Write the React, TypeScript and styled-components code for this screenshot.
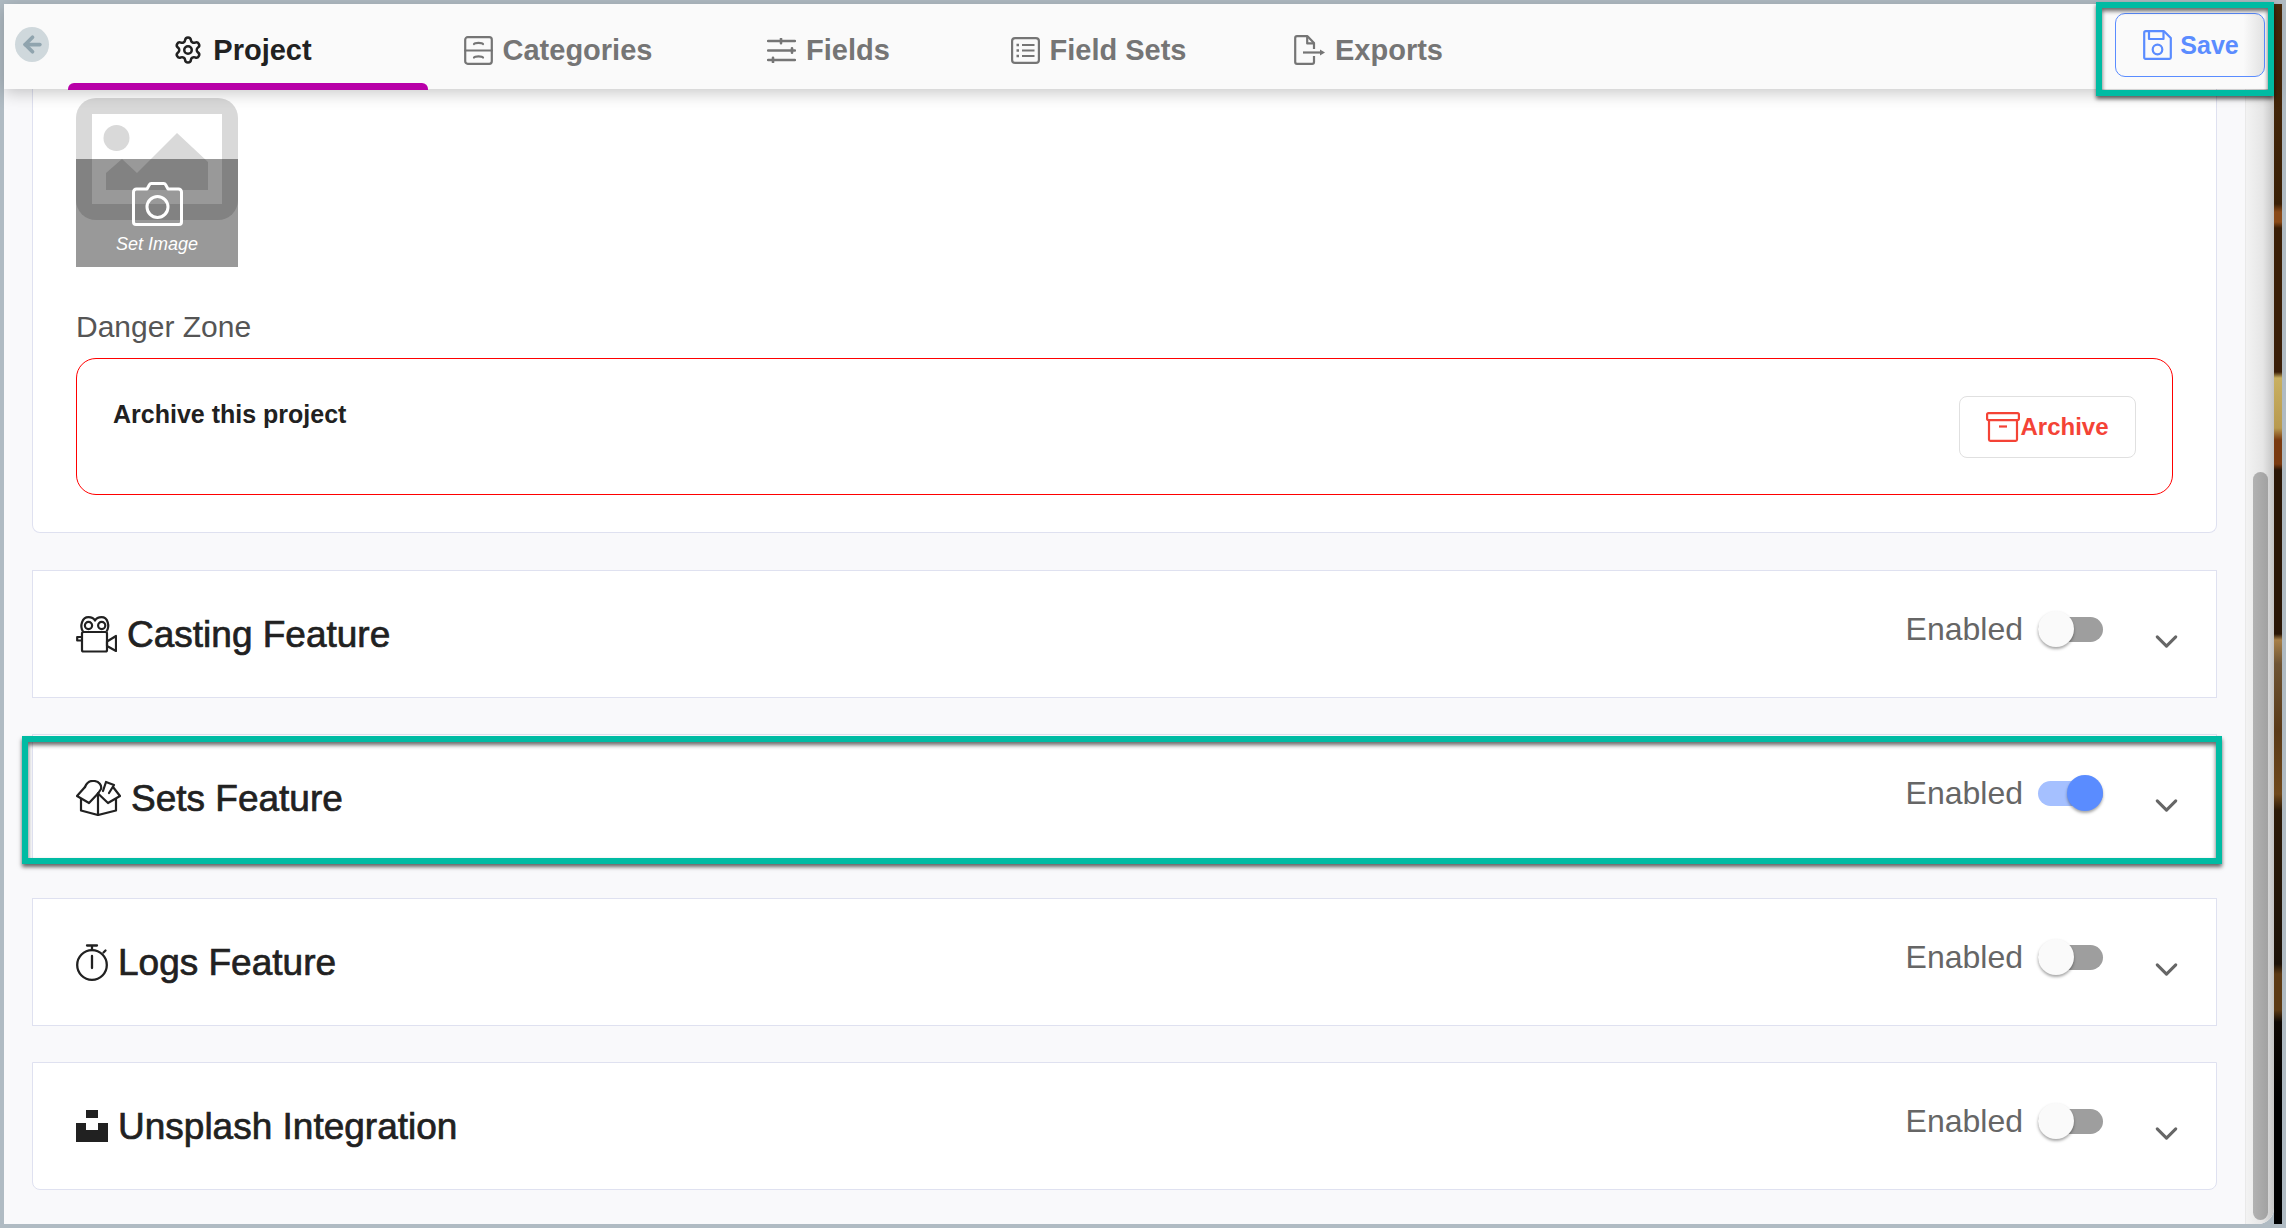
import styled, { createGlobalStyle } from "styled-components";
import { ArrowLeft, ChevronDown, Settings } from "lucide-react";

const TEAL = "#00bba3";
const BLUE = "#5a8cff";
const CARD_LINE = "#dfe1f0";

const GlobalStyle = createGlobalStyle`
  html, body {
    margin: 0;
    padding: 0;
    background: #b0bbc3;
  }

  * {
    box-sizing: border-box;
  }
`;

const Frame = styled.div`
  display: flex;
  width: 2286px;
  height: 1228px;
  padding: 4px;
  overflow: hidden;
  background: #b0bbc3;
  font-family: "Liberation Sans", Arial, sans-serif;
`;

const Window = styled.div`
  display: flex;
  flex-direction: column;
  flex: 1;
  min-width: 0;
  background: #f9f9fb;
  border-bottom-right-radius: 16px;
`;

const Photo = styled.div`
  flex: 0 0 8px;
  background: linear-gradient(
    to bottom,
    #4a2a0c 0,
    #3a2006 200px,
    #8a4a18 208px,
    #8a4a18 218px,
    #3a1e06 224px,
    #3a1e08 368px,
    #c9b060 374px,
    #b89a50 424px,
    #7a3a10 436px,
    #7a3a10 460px,
    #2a1606 466px,
    #2a1606 630px,
    #a88048 636px,
    #6e5434 660px,
    #5a3a18 726px,
    #70491c 790px,
    #2c1a08 806px,
    #1c1208 960px,
    #5c3a14 970px,
    #5c3a14 1006px,
    #0e0804 1018px,
    #000 1100px,
    #000 100%
  );
`;

const Header = styled.header`
  position: relative;
  z-index: 2;
  display: flex;
  flex: 0 0 85px;
  background: #fafafa;
  box-shadow: 0 4px 16px rgba(0, 0, 0, 0.22);
`;

const BackButton = styled.div`
  display: flex;
  justify-content: center;
  align-items: center;
  align-self: center;
  width: 34px;
  height: 35px;
  margin: 0 19px 4px 11px;
  border-radius: 50%;
  background: #cfd8dc;
  color: #90a4ae;
`;

const Tab = styled.div<{ $width: number; $active?: boolean; $shift?: number }>`
  position: relative;
  display: flex;
  justify-content: center;
  align-items: center;
  gap: 10px;
  width: ${(p) => p.$width}px;
  padding: 7px ${(p) => p.$shift ?? 0}px 0 0;
  color: ${(p) => (p.$active ? "#212121" : "#757575")};
  font-weight: 700;
  font-size: 29px;

  ${(p) =>
    p.$active &&
    `
    &::after {
      content: "";
      position: absolute;
      left: 0;
      right: 0;
      bottom: -1px;
      height: 7px;
      border-radius: 6px 6px 0 0;
      background: #b800a8;
    }
  `}
`;

const SaveButton = styled.div`
  position: relative;
  display: flex;
  justify-content: center;
  align-items: center;
  gap: 8px;
  width: 150px;
  height: 64px;
  margin: 9px 9px 0 auto;
  padding-left: 2px;
  border: 1.5px solid ${BLUE};
  border-radius: 10px;
  background: linear-gradient(to right, #fafafa 86%, #e2e2e2);
  color: ${BLUE};
  font-weight: 700;
  font-size: 25px;
`;

const Highlight = styled.div<{ $box: string }>`
  position: absolute;
  inset: ${(p) => p.$box};
  z-index: 3;
  border: 6px solid ${TEAL};
  box-shadow: 0 3px 4px rgba(0, 0, 0, 0.6), inset 0 3px 4px rgba(0, 0, 0, 0.6);
  pointer-events: none;
`;

const Body = styled.div`
  display: flex;
  flex: 1;
  min-height: 0;
`;

const Main = styled.main`
  display: flex;
  flex-direction: column;
  flex: 1;
  min-width: 0;
  padding: 0 28px;
`;

const Gutter = styled.div`
  display: flex;
  flex-direction: column;
  justify-content: flex-end;
  flex: 0 0 29px;
  padding: 0 6px 4px 7px;
  border-left: 1px solid #e9e9e9;
  border-bottom-right-radius: 16px;
  background: linear-gradient(to right, #f3f3f3, #e6e6e6 60%, #c4c4c4);
`;

const Thumb = styled.div`
  height: 748px;
  border-radius: 8px;
  background: linear-gradient(to right, #b2b2b2, #a2a2a2);
`;

const ProjectCard = styled.section`
  height: 444px;
  padding: 9px 43px 0 43px;
  border: 1px solid ${CARD_LINE};
  border-top: none;
  border-radius: 0 0 8px 8px;
  background: #fff;
`;

const ImageTile = styled.div`
  position: relative;
  width: 162px;
  height: 169px;
`;

const TileOverlay = styled.div`
  position: absolute;
  left: 0;
  right: 0;
  bottom: 0;
  display: flex;
  flex-direction: column;
  align-items: center;
  gap: 7px;
  height: 108px;
  padding-top: 23px;
  background: rgba(0, 0, 0, 0.4);
  color: #fff;
  font-style: italic;
  font-size: 18px;
  line-height: 22px;
`;

const SectionLabel = styled.div`
  margin: 43px 0 14px;
  color: #555;
  font-size: 30px;
  line-height: 34px;
`;

const DangerBox = styled.div`
  display: flex;
  justify-content: space-between;
  align-items: center;
  height: 137px;
  padding: 0 36px;
  border: 1.5px solid #f00;
  border-radius: 20px;
`;

const DangerTitle = styled.div`
  align-self: flex-start;
  margin-top: 41px;
  color: #212121;
  font-weight: 700;
  font-size: 25px;
  line-height: 28px;
`;

const ArchiveButton = styled.div`
  display: flex;
  justify-content: center;
  align-items: center;
  width: 177px;
  height: 62px;
  border: 1.5px solid #e0e0e0;
  border-radius: 8px;
  color: #f44336;
  font-weight: 700;
  font-size: 24px;
`;

const FeatureList = styled.div`
  display: flex;
  flex-direction: column;
  gap: 36px;
  margin-top: 37px;
`;

const FeatureCard = styled.section`
  position: relative;
  display: flex;
  justify-content: space-between;
  align-items: center;
  height: 128px;
  padding: 0 40px 0 43px;
  border: 1px solid ${CARD_LINE};
  background: #fff;

  &:last-child {
    border-radius: 0 0 8px 8px;
  }
`;

const FeatureTitle = styled.h2`
  display: flex;
  align-items: center;
  gap: 10px;
  margin: 0;
  color: #212121;
  font-weight: 400;
  font-size: 37px;
`;

const FeatureName = styled.span`
  padding-top: 2px;
  -webkit-text-stroke: 0.7px #212121;
`;

const FeatureControls = styled.div`
  display: flex;
  align-items: center;
`;

const EnabledLabel = styled.div`
  display: flex;
  align-items: center;
  gap: 15px;
  margin-bottom: 10px;
  color: #666;
  font-size: 32px;
`;

const SwitchTrack = styled.div<{ $on?: boolean }>`
  position: relative;
  width: 65px;
  height: 25px;
  border-radius: 13px;
  background: ${(p) => (p.$on ? "#a5c0ff" : "#9e9e9e")};
`;

const SwitchThumb = styled.div<{ $on?: boolean }>`
  position: absolute;
  top: -6px;
  left: ${(p) => (p.$on ? 29 : 0)}px;
  width: 36px;
  height: 36px;
  border-radius: 50%;
  background: ${(p) => (p.$on ? BLUE : "#fafafa")};
  box-shadow: 0 2px 3px rgba(0, 0, 0, 0.35);
`;

const Chevron = styled.div`
  display: flex;
  justify-content: center;
  width: 20px;
  margin: 14px 0 0 53px;
  color: #666;

  svg {
    flex: none;
  }
`;

const CategoriesIcon = () => (
  <svg width="29" height="29" viewBox="0 0 29 29" fill="none" stroke="currentColor" strokeWidth="2.2" strokeLinecap="round">
    <rect x="1.2" y="1.2" width="26.6" height="26.6" rx="2.5" />
    <path d="M1.2 14.5h26.6M10 8c1-1.6 8-1.6 9 0M10 21.5c1-1.6 8-1.6 9 0" />
  </svg>
);

const FieldsIcon = () => (
  <svg width="29" height="25" viewBox="0 0 29 25" fill="none" stroke="currentColor" strokeWidth="2.4" strokeLinecap="round">
    <path d="M1 3h27M1 12.5h27M1 22h27" />
    <path d="M14 .8v4.400M25 10.300v4.400M6 19.800v4.400" strokeWidth="2.6" />
  </svg>
);

const FieldSetsIcon = () => (
  <svg width="29" height="27" viewBox="0 0 29 27" fill="none" stroke="currentColor" strokeWidth="2.2">
    <rect x="1.1" y="1.1" width="26.8" height="24.8" rx="3" />
    <path d="M11 8h12.500M11 13.500h12.500M11 19h12.500" />
    <path d="M5.500 8h2.500M5.500 13.500h2.500M5.500 19h2.500" strokeWidth="2.6" />
  </svg>
);

const ExportsIcon = () => (
  <svg width="31" height="30" viewBox="0 0 31 30" fill="none" stroke="currentColor" strokeWidth="2.2" strokeLinejoin="round">
    <path d="M20 21v6c0 1-.8 1.800-1.800 1.800H3c-1 0-1.800-.8-1.800-1.800V3c0-1 .8-1.800 1.800-1.800h10.500L20 8v6" />
    <path d="M13.200 1.500V8.400H20" />
    <path d="M9 17.500h18" />
    <path d="M26 14.500l5 3-5 3z" fill="currentColor" stroke="none" />
  </svg>
);

const SaveIcon = () => (
  <svg width="29" height="30" viewBox="0 0 29 30" fill="none" stroke="currentColor" strokeWidth="2.2" strokeLinejoin="round">
    <path d="M2.800 1.200H21L27.800 8v19.500c0 .7-.6 1.300-1.300 1.300H2.500c-.7 0-1.300-.6-1.300-1.300V2.800c0-.9.7-1.600 1.600-1.600z" />
    <path d="M6 1.500V9h14.500V1.500" />
    <circle cx="14.500" cy="19.500" r="4.800" />
  </svg>
);

const ArchiveIcon = () => (
  <svg width="34" height="30" viewBox="0 0 34 30" fill="none" stroke="currentColor" strokeWidth="2.2" strokeLinejoin="round">
    <rect x="1.100" y="1.100" width="31.800" height="7" rx="1.500" />
    <path d="M3 8.100v19.500c0 .7.600 1.300 1.300 1.300h25.400c.7 0 1.300-.6 1.300-1.300V8.100" />
    <path d="M13 14.500h8" />
  </svg>
);

const CastingIcon = () => (
  <svg width="41" height="37" viewBox="0 0 41 37" fill="none" stroke="#212121" strokeWidth="2.200" strokeLinejoin="round">
    <path d="M7 15.500C3.500 10 6 1.200 12.500 1.200c3.500 0 5.500 1.500 6.500 3.300 1-1.800 3-3.300 6.500-3.300 6.500 0 8.500 9 5 14.300" />
    <circle cx="12.500" cy="9.500" r="3.600" />
    <circle cx="25.700" cy="9.500" r="3.600" />
    <rect x="6" y="16" width="25" height="19.500" rx="1.500" />
    <path d="M6 21H1.200v3.500H6" />
    <path d="M31 25.500l9-5.500v15l-9-5z" />
  </svg>
);

const SetsIcon = () => (
  <svg width="45" height="36" viewBox="0 0 45 36" fill="none" stroke="#212121" strokeWidth="2.200" strokeLinejoin="round" strokeLinecap="round">
    <path d="M5 19v11.500l17 4.500 18-4.500V19" />
    <path d="M22 13.500V35" />
    <path d="M22 13.500L13 23 1 16l8-9" />
    <path d="M22 13.500L32 23l12-7-7-9" />
    <path d="M9 7c2-5 6-6.500 9.500-6 4.500.7 7.500 4 6.500 8l-3 4.500" />
    <path d="M27 11l3-9 8 3-5 8" />
  </svg>
);

const LogsIcon = () => (
  <svg width="32" height="37" viewBox="0 0 32 37" fill="none" stroke="#212121" strokeWidth="2.300" strokeLinecap="round">
    <circle cx="16" cy="21" r="14.800" />
    <path d="M11 1.500h10M16 1.500v4.500M16 12v12M27.500 8.500l2-2" />
  </svg>
);

const UnsplashIcon = () => (
  <svg width="32" height="32" viewBox="0 0 32 32" fill="#212121">
    <path d="M10 0h12v8H10z" />
    <path d="M0 13h10v7h12v-7h10v19H0z" />
  </svg>
);

const PlaceholderArt = () => (
  <svg width="162" height="122" viewBox="0 0 162 122">
    <rect width="162" height="122" rx="20" fill="#d9d9d9" />
    <rect x="16" y="16" width="130" height="90" fill="#fff" />
    <circle cx="40.500" cy="40" r="13" fill="#d9d9d9" />
    <path d="M30 92V75l16-14 15 14 40-40 31 29v28z" fill="#d9d9d9" />
  </svg>
);

const CameraIcon = () => (
  <svg width="51" height="44" viewBox="0 0 51 44" fill="none" stroke="#fff" strokeWidth="3" strokeLinejoin="round">
    <path d="M15 7l2.500-4.500c.3-.6 1-1 1.700-1h12.600c.7 0 1.400.4 1.700 1L36 7h10.500c1.700 0 3 1.300 3 3v30c0 1.400-1.100 2.500-2.500 2.500H4c-1.400 0-2.500-1.100-2.500-2.500V10c0-1.700 1.300-3 3-3z" />
    <circle cx="25.500" cy="25" r="10.500" />
  </svg>
);

const features = [
  { title: "Casting Feature", icon: <CastingIcon /> },
  { title: "Sets Feature", icon: <SetsIcon />, on: true },
  { title: "Logs Feature", icon: <LogsIcon /> },
  { title: "Unsplash Integration", icon: <UnsplashIcon /> },
];

const App = () => (
  <>
    <GlobalStyle />
    <Frame>
      <Window>
        <Header>
          <BackButton>
            <ArrowLeft size={25} strokeWidth={3.6} />
          </BackButton>
          <Tab $width={360} $shift={11} $active>
            <Settings size={30} strokeWidth={2} />
            Project
          </Tab>
          <Tab $width={260}>
            <CategoriesIcon />
            Categories
          </Tab>
          <Tab $width={281}>
            <FieldsIcon />
            Fields
          </Tab>
          <Tab $width={259}>
            <FieldSetsIcon />
            Field Sets
          </Tab>
          <Tab $width={281}>
            <ExportsIcon />
            Exports
          </Tab>
          <SaveButton>
            <SaveIcon />
            Save
            <Highlight $box="-12px -10px -20px -20px" />
          </SaveButton>
        </Header>
        <Body>
          <Main>
            <ProjectCard>
              <ImageTile>
                <PlaceholderArt />
                <TileOverlay>
                  <CameraIcon />
                  <span>Set Image</span>
                </TileOverlay>
              </ImageTile>
              <SectionLabel>Danger Zone</SectionLabel>
              <DangerBox>
                <DangerTitle>Archive this project</DangerTitle>
                <ArchiveButton>
                  <ArchiveIcon />
                  Archive
                </ArchiveButton>
              </DangerBox>
            </ProjectCard>
            <FeatureList>
              {features.map((feature) => (
                <FeatureCard key={feature.title}>
                  <FeatureTitle>
                    {feature.icon}
                    <FeatureName>{feature.title}</FeatureName>
                  </FeatureTitle>
                  <FeatureControls>
                    <EnabledLabel>
                      Enabled
                      <SwitchTrack $on={feature.on}>
                        <SwitchThumb $on={feature.on} />
                      </SwitchTrack>
                    </EnabledLabel>
                    <Chevron>
                      <ChevronDown size={37} strokeWidth={2} />
                    </Chevron>
                  </FeatureControls>
                  {feature.on && <Highlight $box="1px -6px -3px -11px" />}
                </FeatureCard>
              ))}
            </FeatureList>
          </Main>
          <Gutter>
            <Thumb />
          </Gutter>
        </Body>
      </Window>
      <Photo />
    </Frame>
  </>
);

export default App;
